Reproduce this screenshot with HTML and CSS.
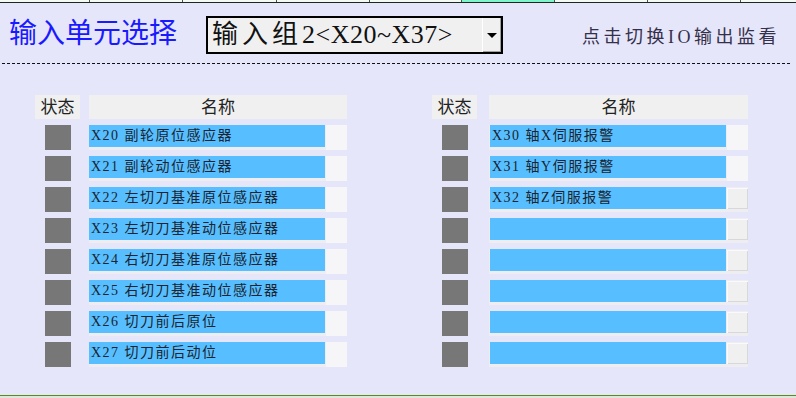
FILE: index.html
```html
<!DOCTYPE html>
<html>
<head>
    <title>输入单元选择</title>
    <link rel="stylesheet" href="styles.css">
</head>
<body>
    <div class="screen">
        <div class="topbar">
            <div class="cell" style="width: 90px"></div>
            <div class="cell" style="width: 93px"></div>
            <div class="cell" style="width: 94px"></div>
            <div class="cell" style="width: 93px"></div>
            <div class="cell" style="width: 92px"></div>
            <div class="cell active" style="width: 93px"></div>
            <div class="cell" style="width: 93px"></div>
            <div class="cell" style="width: 93px"></div>
            <div class="cell last"></div>
        </div>

        <div class="header">
            <div class="title">输入单元选择</div>
            <div class="combo">
                <div class="combo-text"><span class="cjk">输入组</span>2&lt;X20~X37&gt;</div>
                <div class="combo-btn"><span class="arrow"></span></div>
            </div>
            <div class="switch">点击切换IO输出监看</div>
        </div>
        <div class="divider"></div>

        <div class="tables">
            <div class="panel left">
                <div class="head">状态</div>
                <div class="head">名称</div>

                <div class="state"></div>
                <div class="name"><div class="bar">X20 副轮原位感应器</div><div class="tail"></div></div>
                <div class="state"></div>
                <div class="name"><div class="bar">X21 副轮动位感应器</div><div class="tail"></div></div>
                <div class="state"></div>
                <div class="name"><div class="bar">X22 左切刀基准原位感应器</div><div class="tail"></div></div>
                <div class="state"></div>
                <div class="name"><div class="bar">X23 左切刀基准动位感应器</div><div class="tail"></div></div>
                <div class="state"></div>
                <div class="name"><div class="bar">X24 右切刀基准原位感应器</div><div class="tail"></div></div>
                <div class="state"></div>
                <div class="name"><div class="bar">X25 右切刀基准动位感应器</div><div class="tail"></div></div>
                <div class="state"></div>
                <div class="name"><div class="bar">X26 切刀前后原位</div><div class="tail"></div></div>
                <div class="state"></div>
                <div class="name"><div class="bar">X27 切刀前后动位</div><div class="tail"></div></div>
            </div>

            <div class="panel right">
                <div class="head">状态</div>
                <div class="head">名称</div>

                <div class="state"></div>
                <div class="name"><div class="bar">X30 轴X伺服报警</div><div class="tail"></div></div>
                <div class="state"></div>
                <div class="name"><div class="bar">X31 轴Y伺服报警</div><div class="tail"></div></div>
                <div class="state"></div>
                <div class="name"><div class="bar">X32 轴Z伺服报警</div><div class="tail btn"></div></div>
                <div class="state"></div>
                <div class="name"><div class="bar"></div><div class="tail btn"></div></div>
                <div class="state"></div>
                <div class="name"><div class="bar"></div><div class="tail btn"></div></div>
                <div class="state"></div>
                <div class="name"><div class="bar"></div><div class="tail btn"></div></div>
                <div class="state"></div>
                <div class="name"><div class="bar"></div><div class="tail btn"></div></div>
                <div class="state"></div>
                <div class="name"><div class="bar"></div><div class="tail btn"></div></div>
            </div>
        </div>

        <div class="bottombar"></div>
    </div>
</body>
</html>
```

FILE: styles.css
```css
body {
    margin: 0;
    padding: 0;
    background: #e6e6fa;
    font-family: "Liberation Serif", "Noto Sans CJK SC", serif;
}
.screen {
    width: 796px;
    height: 398px;
    display: flex;
    flex-direction: column;
    overflow: hidden;
}
.topbar {
    display: flex;
    height: 2px;
    border-bottom: 1px solid #1c2a1c;
    background: #f4fbf4;
}
.topbar .cell {
    box-sizing: border-box;
    border-right: 1px solid #44554a;
}
.topbar .cell.active {
    background: #7ff5cc;
}
.topbar .cell.last {
    flex: 1;
    border-right: none;
}
.header {
    display: flex;
    align-items: center;
    height: 60px;
    padding-left: 9px;
}
.title {
    width: 197px;
    font-family: "Noto Sans CJK SC", sans-serif;
    font-size: 28px;
    color: #1a1aff;
    margin-top: -4px;
}
.combo {
    display: flex;
    box-sizing: border-box;
    width: 297px;
    height: 38px;
    border: 2px solid #000;
    background: #f0f0f0;
    margin-top: 4px;
}
.combo-text {
    flex: 1;
    padding-left: 4px;
    font-size: 26px;
    line-height: 34px;
    letter-spacing: 0.5px;
    color: #111;
    white-space: nowrap;
}
.combo-text .cjk {
    letter-spacing: 4px;
}
.combo-btn {
    width: 18px;
    display: flex;
    align-items: center;
    justify-content: center;
    border-left: 1px solid #fff;
    box-shadow: inset -1px -1px 0 #a0a0a0;
}
.arrow {
    width: 0;
    height: 0;
    border-left: 5px solid transparent;
    border-right: 5px solid transparent;
    border-top: 5px solid #000;
}
.switch {
    margin-left: auto;
    margin-right: 16px;
    margin-top: 3px;
    font-size: 18px;
    letter-spacing: 3.5px;
    color: #35304a;
}
.divider {
    margin: 0 6px 0 2px;
    border-top: 1px dashed #111;
}
.tables {
    flex: 1;
    display: flex;
    padding-top: 31px;
}
.panel {
    display: grid;
    grid-template-rows: 24px repeat(8, 25px);
    row-gap: 6px;
    align-content: start;
}
.panel.left {
    grid-template-columns: 45px 258px;
    column-gap: 9px;
    margin-left: 35px;
}
.panel.right {
    grid-template-columns: 45px 259px;
    column-gap: 12px;
    margin-left: 85px;
}
.head {
    background: #f0f0f0;
    text-align: center;
    font-family: "Noto Sans CJK SC", sans-serif;
    font-size: 17px;
    line-height: 22px;
    color: #222;
}
.state {
    width: 26px;
    height: 25px;
    justify-self: center;
    background: #777777;
}
.name {
    display: flex;
    background: #eeeef2;
}
.right .name {
    padding-left: 1px;
}
.bar {
    width: 236px;
    height: 22px;
    background: #57bfff;
    padding-left: 2px;
    box-sizing: border-box;
    font-size: 14px;
    line-height: 22px;
    letter-spacing: 1.5px;
    color: #1b2430;
    white-space: nowrap;
}
.tail {
    flex: 1;
    margin-left: 1px;
    background: #f6f6f8;
}
.tail.btn {
    height: 21px;
    margin-top: 1px;
    background: #f0f0f0;
    border-top: 1px solid #fafafa;
    border-left: 1px solid #fafafa;
    box-shadow: inset -1px -1px 0 #d8d8d8;
    box-sizing: border-box;
}
.bottombar {
    height: 2px;
    border-top: 1px solid #5a8a1e;
    background: #dfe8d8;
}
```
